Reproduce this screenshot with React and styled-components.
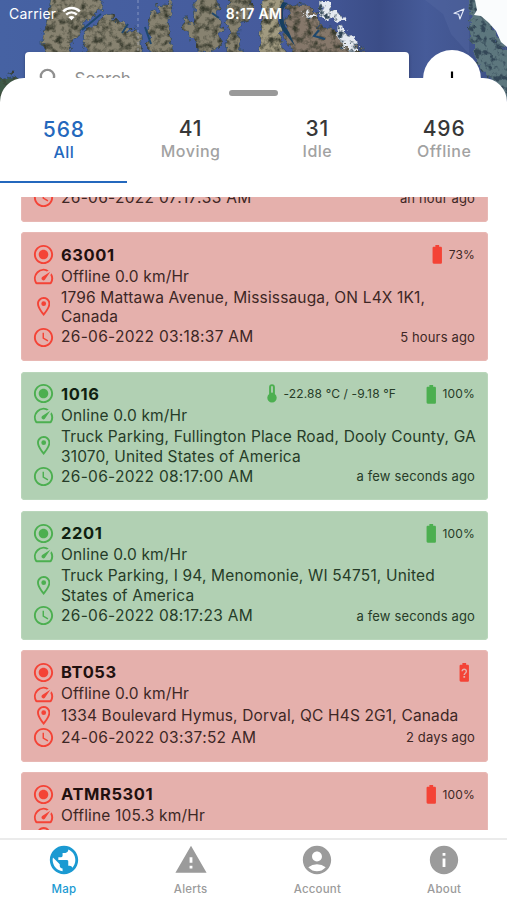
import React from 'react';
import styled, { createGlobalStyle } from 'styled-components';
import {
  MdRadioButtonChecked, MdSpeed, MdAccessTime, MdBatteryFull,
  MdBatteryUnknown, MdPublic, MdWarning, MdAccountCircle, MdInfo,
  MdSearch, MdAdd,
} from 'react-icons/md';

const Global = createGlobalStyle`
  * { box-sizing: border-box; }
  body { margin: 0; background: #fff; font-family: Inter, "Liberation Sans", sans-serif; }
`;

const Screen = styled.div`
  display: grid;
  grid-template-columns: minmax(0, 1fr);
  grid-template-rows: 77.5px 760.5px 62px;
  width: 507px;
  height: 900px;
  overflow: hidden;
  background: #fff;
`;

const MapArea = styled.header`
  position: relative;
  height: 110px;
  overflow: hidden;
  background: #435896;
`;

const Terrain = styled.svg`
  position: absolute;
  inset: 0;
  display: block;
`;

const MapContent = styled.div`
  position: relative;
`;

const StatusBar = styled.div`
  display: grid;
  grid-template-columns: 1fr auto 1fr;
  align-items: center;
  height: 28px;
  padding: 0 42px 1px 9px;
  color: #fff;
  font-size: 14px;
  letter-spacing: 0.2px;
`;

const Carrier = styled.div`
  display: flex;
  align-items: center;
  gap: 6px;
`;

const Clock = styled.div`
  padding-left: 34px;
  font-weight: 600;
  font-size: 14px;
  letter-spacing: 0.35px;
`;

const Locate = styled.div`
  display: flex;
  justify-content: flex-end;
`;

const SearchRow = styled.div`
  display: flex;
  gap: 14px;
  padding: 22px 0 0 25px;
  align-items: flex-start;
`;

const SearchField = styled.div`
  display: flex;
  align-items: center;
  gap: 10px;
  width: 384px;
  height: 54px;
  margin-top: 2px;
  padding-left: 10.5px;
  border-radius: 4px;
  background: #fff;
  color: #909090;
  font-size: 17px;
  box-shadow: 0 1px 3px rgba(0, 0, 0, 0.3);
`;

const RoundButton = styled.div`
  display: flex;
  align-items: center;
  justify-content: center;
  width: 58px;
  height: 58px;
  border-radius: 50%;
  background: #fff;
  color: #000;
`;

const Sheet = styled.main`
  position: relative;
  display: flex;
  flex-direction: column;
  min-height: 0;
  border-radius: 24px 24px 0 0;
  background: #fff;
`;

const Handle = styled.div`
  flex: none;
  width: 49px;
  height: 6px;
  margin: 12.5px auto 0;
  border-radius: 3px;
  background: #999;
`;

const Tabs = styled.nav`
  display: grid;
  grid-template-columns: repeat(4, minmax(0, 1fr));
  flex: none;
  height: 87px;
  margin-bottom: 14px;
`;

const Tab = styled.div`
  display: flex;
  flex-direction: column;
  align-items: center;
  padding-top: ${(p) => (p.$active ? '20.6px' : '20px')};
  border-bottom: 2px solid ${(p) => (p.$active ? '#2468bd' : 'transparent')};
  color: ${(p) => (p.$active ? '#2468bd' : '#a2a2a2')};
`;

const TabCount = styled.span`
  padding-left: 1px;
  color: ${(p) => (p.$active ? '#2468bd' : '#373737')};
  font-size: 21px;
  font-weight: 500;
  line-height: 25px;
  letter-spacing: 0.9px;
`;

const TabLabel = styled.span`
  padding-left: 1px;
  font-size: 16px;
  font-weight: 500;
  line-height: 20px;
  letter-spacing: 0.5px;
`;

const List = styled.section`
  display: flex;
  flex-direction: column;
  justify-content: flex-start;
  gap: 10.3px;
  height: 633px;
  padding: 0 19.5px 0 21px;
  overflow: hidden;
`;

const tones = {
  offline: { fill: '#e5b0ac', edge: '#e8b8b4', icon: '#f44336', text: '#3d2725', title: '#21100f' },
  online: { fill: '#b1d0b3', edge: '#b9d6bb', icon: '#4caf50', text: '#263c28', title: '#101f11' },
};

const Card = styled.article`
  flex: none;
  padding: 10.85px 12.5px 13.95px;
  margin-top: ${(p) => (p.$scrolled ? '-21.5px' : '0')};
  box-shadow: inset 0 0 0 1px ${(p) => tones[p.$tone].edge};
  border-radius: 4px;
  background: ${(p) => tones[p.$tone].fill};
  color: ${(p) => tones[p.$tone].text};
`;

const Row = styled.div`
  display: grid;
  grid-template-columns: 20px minmax(0, 1fr) auto;
  column-gap: 7.5px;
  align-items: center;
  height: ${(p) => (p.$tall ? '39.1px' : '21.7px')};
`;

const AddressRow = styled(Row)`
  grid-template-columns: 20px minmax(0, 1fr);
`;

const IconCell = styled.span`
  display: flex;
  justify-content: center;
  color: ${(p) => tones[p.$tone].icon};
  svg { flex: none; }
`;

const Title = styled.strong`
  color: ${(p) => tones[p.$tone].title};
  font-size: 16.5px;
  font-weight: 700;
  letter-spacing: 0.6px;
`;

const Line = styled.span`
  font-size: 15.5px;
  line-height: 19.4px;
  letter-spacing: 0.16px;
  white-space: pre;
`;

const Address = styled(Line)`
  padding-top: 1.4px;
`;

const Timestamp = styled(Line)`
  letter-spacing: 0.29px;
`;

const Ago = styled.span`
  font-size: 13px;
  letter-spacing: 0.15px;
`;

const Readings = styled.div`
  display: flex;
  align-items: center;
  gap: 24px;
`;

const Reading = styled.span`
  display: flex;
  align-items: center;
  gap: ${(p) => p.$gap || 0}px;
  font-size: 12px;
  letter-spacing: 0.15px;
  svg { color: ${(p) => tones[p.$tone].icon}; }
`;

const BottomBar = styled.footer`
  display: grid;
  grid-template-columns: repeat(4, minmax(0, 1fr));
  border-top: 2px solid #ebebeb;
  background: #fff;
`;

const NavItem = styled.div`
  display: flex;
  flex-direction: column;
  align-items: center;
  padding: 2.5px 0 0 1px;
  color: ${(p) => (p.$active ? '#1b9ad2' : '#9b9b9b')};
  font-size: 11.5px;
  font-weight: 500;
  line-height: 14px;
  letter-spacing: 0.2px;
  svg { margin-bottom: 5px; }
`;

const Thermometer = () => (
  <svg width="10" height="19" viewBox="0 0 10 19">
    <path d="M5 0.3a2.9 2.9 0 0 0-2.9 2.9v6.9a4.7 4.7 0 1 0 5.8 0V3.2A2.9 2.9 0 0 0 5 0.3z" fill="currentColor" />
    <path d="M5 2.9v5" stroke="#b1d0b3" strokeWidth="1.8" strokeLinecap="round" />
  </svg>
);

const Pin = () => (
  <svg width="13.4" height="19" viewBox="5 2 14 20" fill="currentColor">
    <path d="M12 2C8.13 2 5 5.13 5 9c0 5.25 7 13 7 13s7-7.75 7-13c0-3.87-3.13-7-7-7zM7 9c0-2.76 2.24-5 5-5s5 2.24 5 5c0 2.88-2.88 7.19-5 9.88C9.92 16.21 7 11.85 7 9z" fillRule="evenodd" />
    <circle cx="12" cy="9" r="2.5" />
  </svg>
);

const Wifi = () => (
  <svg width="19" height="15" viewBox="0 0 19 15" fill="none" stroke="#fff" strokeWidth="2.4">
    <path d="M1.2 5.4a11.8 11.8 0 0 1 16.6 0" />
    <path d="M4.2 8.6a7.5 7.5 0 0 1 10.6 0" />
    <path d="M9.5 14.3l-3-3.1a4.2 4.2 0 0 1 6 0z" fill="#fff" stroke="none" />
  </svg>
);

const LocationArrow = () => (
  <svg width="12" height="12" viewBox="0 0 12 12" fill="none" stroke="#e6ecfa" strokeWidth="1.1" strokeLinejoin="round">
    <path d="M11 1L1 5.2l4.7 1.1L6.9 11z" />
  </svg>
);

const MapDrawing = () => (
  <Terrain width="507" height="110" viewBox="0 0 507 110">
    <defs>
      <linearGradient id="sea" x1="0" x2="1">
        <stop offset="0" stopColor="#4662a3" />
        <stop offset="0.6" stopColor="#465a9b" />
        <stop offset="0.75" stopColor="#3b4d87" />
        <stop offset="0.84" stopColor="#465b99" />
        <stop offset="1" stopColor="#3d4f85" />
      </linearGradient>
      <filter id="rock" x="0" y="0" width="507" height="110" filterUnits="userSpaceOnUse" colorInterpolationFilters="sRGB">
        <feTurbulence type="fractalNoise" baseFrequency="0.12" numOctaves="3" seed="4" result="wave" />
        <feDisplacementMap in="SourceGraphic" in2="wave" scale="12" xChannelSelector="R" yChannelSelector="G" result="land" />
        <feTurbulence type="fractalNoise" baseFrequency="0.16" numOctaves="4" seed="8" result="n" />
        <feColorMatrix in="n" values="0 0 0 0 0.22  0 0 0 0 0.23  0 0 0 0 0.18  2.6 0 0 0 -1.1" result="shade" />
        <feComposite in="shade" in2="land" operator="in" result="cut" />
        <feMerge><feMergeNode in="land" /><feMergeNode in="cut" /></feMerge>
      </filter>
      <filter id="snow" x="0" y="0" width="507" height="110" filterUnits="userSpaceOnUse" colorInterpolationFilters="sRGB">
        <feTurbulence type="fractalNoise" baseFrequency="0.16" numOctaves="4" seed="3" result="n" />
        <feDisplacementMap in="SourceGraphic" in2="n" scale="14" xChannelSelector="R" yChannelSelector="G" result="land" />
        <feColorMatrix in="n" values="0 0 0 0 0.2  0 0 0 0 0.28  0 0 0 0 0.34  5 0 0 0 -2.5" result="shade" />
        <feComposite in="shade" in2="land" operator="in" result="cut" />
        <feMerge><feMergeNode in="land" /><feMergeNode in="cut" /></feMerge>
      </filter>
    </defs>
    <rect width="507" height="110" fill="url(#sea)" />
    <path d="M425 0l18 14 8 20 18 20V0z" fill="#52659f" opacity="0.5" />
    <g filter="url(#rock)" fill="#878270" stroke="#2c4a62" strokeWidth="0.7">
      <path d="M51-6h46l6 14-6 7-15 10-4 9-5 6-3 16H51L41 41l3-15 5-10z" />
      <path d="M82 46l4-14 12-9 9-11 6 3-1 9 4-4 8 2 6 5-3 7 7-6 5 3 4 26H89z" />
      <path d="M148 27l3-13 8-1-1-7 5-3 8 1 1 10-5 7 6 35h-24z" />
      <path d="M194-6h22l2 16-1 9 5 9-3 18-8 7-14-3-5-12-8-9-2-11 5-1 6 8 3-7-2-10z" />
      <path d="M228-6h25l-3 24-9 6-3 14 4 18h-14l-2-11 4-10-4-12z" />
      <path d="M264-6h22l-4 11-5 12 4 18 5 21h-25l-1-26z" fill="#a19a80" />
      <path d="M288 6l10-3 12 2 8 8 1 14 11 0 12 8 6 10 26 11h-78l-12-21 1-17z" fill="#85776a" />
      <path d="M-5 80l15-5 8 2v30H-5z" fill="#3f5a48" />
    </g>
    <path d="M288 3q-6 4-5 14t6 15l6 14-7-9q-9-9-9-20t4-15z" fill="#173f5f" />
    <path d="M145 27l6 17M212 13l7 5M128 24l-6 9M101 14L82 30M319 30l-5 6 11 3" fill="none" stroke="#1f486d" strokeWidth="2" />
    <g filter="url(#snow)">
      <path d="M469-5h10l6 23 11 14 8 16 9 9v50l-18-26-14-10-6-14-5-25z" fill="#5d777e" />
      <path d="M320 4l9 1 12 8 5 9-9-2-6-2-5 4-6-6z" fill="#e4e9f0" />
      <path d="M340 27l6 2 5 8 7 5 2 8h-15l-3-9-6-5z" fill="#e4e9f0" />
      <path d="M302 12l9 1 4 4-8 0z" fill="#e4e9f0" />
    </g>
    <path d="M475 0h32v47l-6-5-5-11-7-8-8-7-7-1 3-5z" fill="#fafcfd" />
    <path d="M138 0v52" stroke="#c8cfe4" strokeWidth="0.8" strokeDasharray="3 3" opacity="0.6" />
  </Terrain>
);

const tabs = [['568', 'All'], ['41', 'Moving'], ['31', 'Idle'], ['496', 'Offline']];

const vehicles = [
  { id: 'previous', tone: 'offline', time: '26-06-2022 07:17:33 AM', ago: 'an hour ago', scrolled: true },
  { id: '63001', tone: 'offline', speed: 'Offline 0.0 km/Hr', address: '1796 Mattawa Avenue, Mississauga, ON L4X 1K1,\nCanada', time: '26-06-2022 03:18:37 AM', ago: '5 hours ago', battery: '73%' },
  { id: '1016', tone: 'online', speed: 'Online 0.0 km/Hr', address: 'Truck Parking, Fullington Place Road, Dooly County, GA\n31070, United States of America', time: '26-06-2022 08:17:00 AM', ago: 'a few seconds ago', battery: '100%', temp: '-22.88 °C / -9.18 °F' },
  { id: '2201', tone: 'online', speed: 'Online 0.0 km/Hr', address: 'Truck Parking, I 94, Menomonie, WI 54751, United\nStates of America', time: '26-06-2022 08:17:23 AM', ago: 'a few seconds ago', battery: '100%' },
  { id: 'BT053', tone: 'offline', speed: 'Offline 0.0 km/Hr', address: '1334 Boulevard Hymus, Dorval, QC H4S 2G1, Canada', time: '24-06-2022 03:37:52 AM', ago: '2 days ago' },
  { id: 'ATMR5301', tone: 'offline', speed: 'Offline 105.3 km/Hr', address: '', time: '', ago: '', battery: '100%' },
];

const nav = [['Map', MdPublic], ['Alerts', MdWarning], ['Account', MdAccountCircle], ['About', MdInfo]];

function VehicleDetails({ v }) {
  const tone = v.tone;
  return (
    <>
      <Row>
        <IconCell $tone={tone}><MdRadioButtonChecked size={23} /></IconCell>
        <Title $tone={tone}>{v.id}</Title>
        <Readings>
          {v.temp && <Reading $tone={tone} $gap={6.5}><Thermometer />{v.temp}</Reading>}
          <Reading $tone={tone}>
            {v.battery ? <MdBatteryFull size={22.5} /> : <MdBatteryUnknown size={22.5} />}
            {v.battery}
          </Reading>
        </Readings>
      </Row>
      <Row>
        <IconCell $tone={tone}><MdSpeed size={23} /></IconCell>
        <Line>{v.speed}</Line>
      </Row>
      <AddressRow $tall={v.address.includes('\n')}>
        <IconCell $tone={tone}><Pin /></IconCell>
        <Address>{v.address}</Address>
      </AddressRow>
    </>
  );
}

function Vehicle({ v }) {
  return (
    <Card $tone={v.tone} $scrolled={v.scrolled}>
      {!v.scrolled && <VehicleDetails v={v} />}
      <Row>
        <IconCell $tone={v.tone}><MdAccessTime size={23} /></IconCell>
        <Timestamp>{v.time}</Timestamp>
        <Ago>{v.ago}</Ago>
      </Row>
    </Card>
  );
}

export default function App() {
  return (
    <>
      <Global />
      <Screen>
        <MapArea>
          <MapDrawing />
          <MapContent>
            <StatusBar>
              <Carrier>Carrier <Wifi /></Carrier>
              <Clock>8:17 AM</Clock>
              <Locate><LocationArrow /></Locate>
            </StatusBar>
            <SearchRow>
              <SearchField><MdSearch size={29} />Search</SearchField>
              <RoundButton><MdAdd size={26} /></RoundButton>
            </SearchRow>
          </MapContent>
        </MapArea>
        <Sheet>
          <Handle />
          <Tabs>
            {tabs.map(([count, label], i) => (
              <Tab key={label} $active={i === 0}>
                <TabCount $active={i === 0}>{count}</TabCount>
                <TabLabel>{label}</TabLabel>
              </Tab>
            ))}
          </Tabs>
          <List>{vehicles.map((v) => <Vehicle key={v.id} v={v} />)}</List>
        </Sheet>
        <BottomBar>
          {nav.map(([label, Icon], i) => (
            <NavItem key={label} $active={i === 0}><Icon size={34} />{label}</NavItem>
          ))}
        </BottomBar>
      </Screen>
    </>
  );
}
